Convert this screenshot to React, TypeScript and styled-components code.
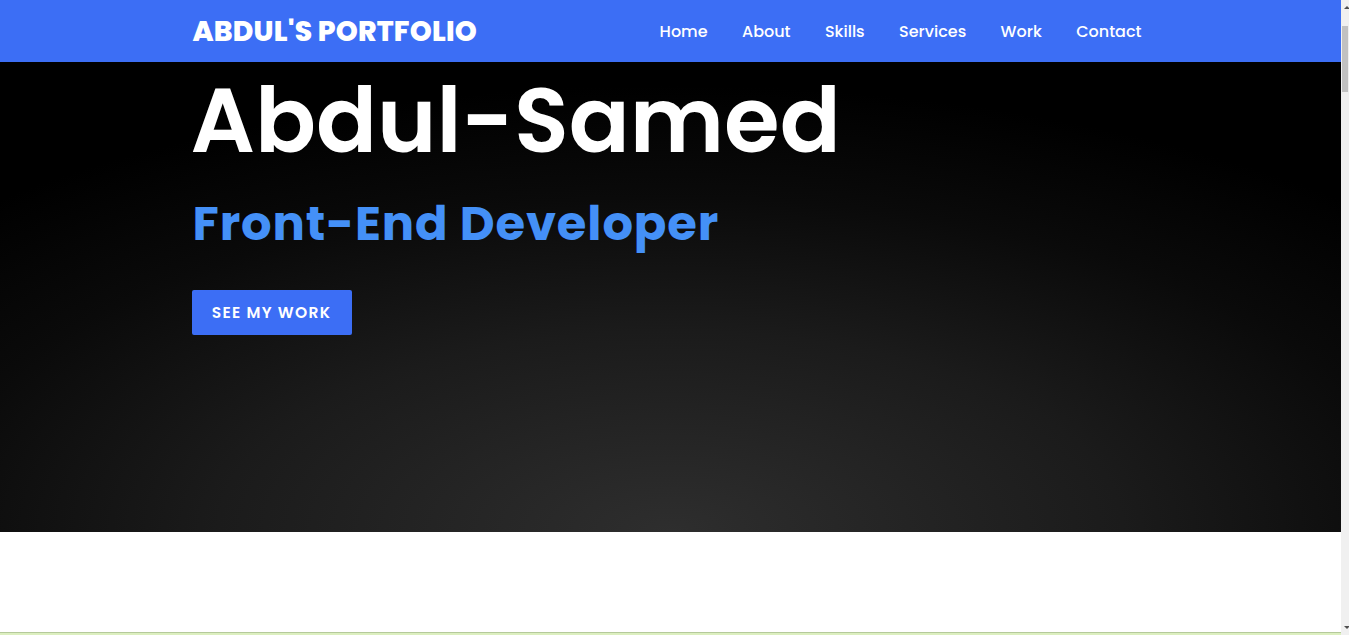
import React from "react";
import styled, { createGlobalStyle } from "styled-components";

const GlobalStyle = createGlobalStyle`
  * { box-sizing: border-box; }
  html, body { margin: 0; padding: 0; }
  body {
    font-family: "Poppins", "Open Sans", "Liberation Sans", sans-serif;
    background: #ffffff;
  }
`;

const Page = styled.div`
  margin-right: 8px;
`;

const Scrollbar = styled.div`
  position: fixed;
  top: 0;
  right: 0;
  width: 8px;
  height: 100vh;
  background: #f0f0f0;
  z-index: 10;
`;

const ScrollThumb = styled.div`
  position: absolute;
  top: 26px;
  left: 1px;
  width: 6px;
  height: 66px;
  background: #c1c1c1;
`;

const ScrollArrow = styled.div<{ $down?: boolean }>`
  position: absolute;
  left: 3px;
  ${(p) => (p.$down ? "bottom: 6px;" : "top: 6px;")}
  width: 0;
  height: 0;
  border-left: 3px solid transparent;
  border-right: 3px solid transparent;
  ${(p) =>
    p.$down ? "border-top: 3px solid #505050;" : "border-bottom: 3px solid #505050;"}
`;

const Nav = styled.header`
  height: 62px;
  background: #3c6ef5;
`;

const Container = styled.div`
  max-width: 960px;
  margin: 0 auto;
  height: 100%;
`;

const NavInner = styled(Container)`
  display: flex;
  align-items: center;
  justify-content: space-between;
`;

const Logo = styled.a`
  color: #ffffff;
  font-size: 28px;
  font-weight: 800;
  letter-spacing: 0.2px;
  text-decoration: none;
  padding-left: 2px;
  padding-top: 1px;
`;

const Menu = styled.nav`
  display: flex;
  gap: 34.4px;
  padding-right: 9px;
`;

const MenuLink = styled.a`
  color: #ffffff;
  font-size: 16px;
  font-weight: 500;
  text-decoration: none;
`;

const Hero = styled.section`
  height: 470px;
  background: radial-gradient(ellipse 75% 95% at 50% 100%, #2e2e2e 0%, #1b1b1b 45%, #0a0a0a 75%, #000000 100%);
`;

const HeroInner = styled(Container)`
  display: flex;
  flex-direction: column;
  align-items: flex-start;
`;

const Name = styled.h1`
  margin: 9px 0 0;
  color: #ffffff;
  font-size: 90px;
  font-weight: 600;
  line-height: 1.1;
  letter-spacing: 0;
`;

const Role = styled.h2`
  margin: 28px 0 0 2px;
  color: #4490f7;
  font-size: 48px;
  font-weight: 700;
  line-height: 1.1;
  letter-spacing: 0.9px;
`;

const CTA = styled.a`
  margin-top: 39px;
  margin-left: 1px;
  display: inline-flex;
  align-items: center;
  justify-content: center;
  width: 160px;
  height: 45px;
  background: #3c6ef5;
  color: #ffffff;
  font-size: 15.5px;
  font-weight: 600;
  letter-spacing: 1.3px;
  text-transform: uppercase;
  text-decoration: none;
  border-radius: 2px;
`;

const Spacer = styled.section`
  height: 100px;
  background: #ffffff;
`;

const About = styled.section`
  min-height: 5100px;
  background: #dcefbf;
  border-top: 1px solid #b5c99b;
`;

export default function App() {
  const links = ["Home", "About", "Skills", "Services", "Work", "Contact"];
  return (
    <>
      <GlobalStyle />
      <Page>
        <Nav>
          <NavInner>
            <Logo href="#">ABDUL'S PORTFOLIO</Logo>
            <Menu>
              {links.map((l) => (
                <MenuLink key={l} href={`#${l.toLowerCase()}`}>
                  {l}
                </MenuLink>
              ))}
            </Menu>
          </NavInner>
        </Nav>
        <Hero>
          <HeroInner>
            <Name>Abdul-Samed</Name>
            <Role>Front-End Developer</Role>
            <CTA href="#work">See my work</CTA>
          </HeroInner>
        </Hero>
        <Spacer />
        <About id="about" />
      </Page>
      <Scrollbar>
        <ScrollArrow />
        <ScrollThumb />
        <ScrollArrow $down />
      </Scrollbar>
    </>
  );
}
